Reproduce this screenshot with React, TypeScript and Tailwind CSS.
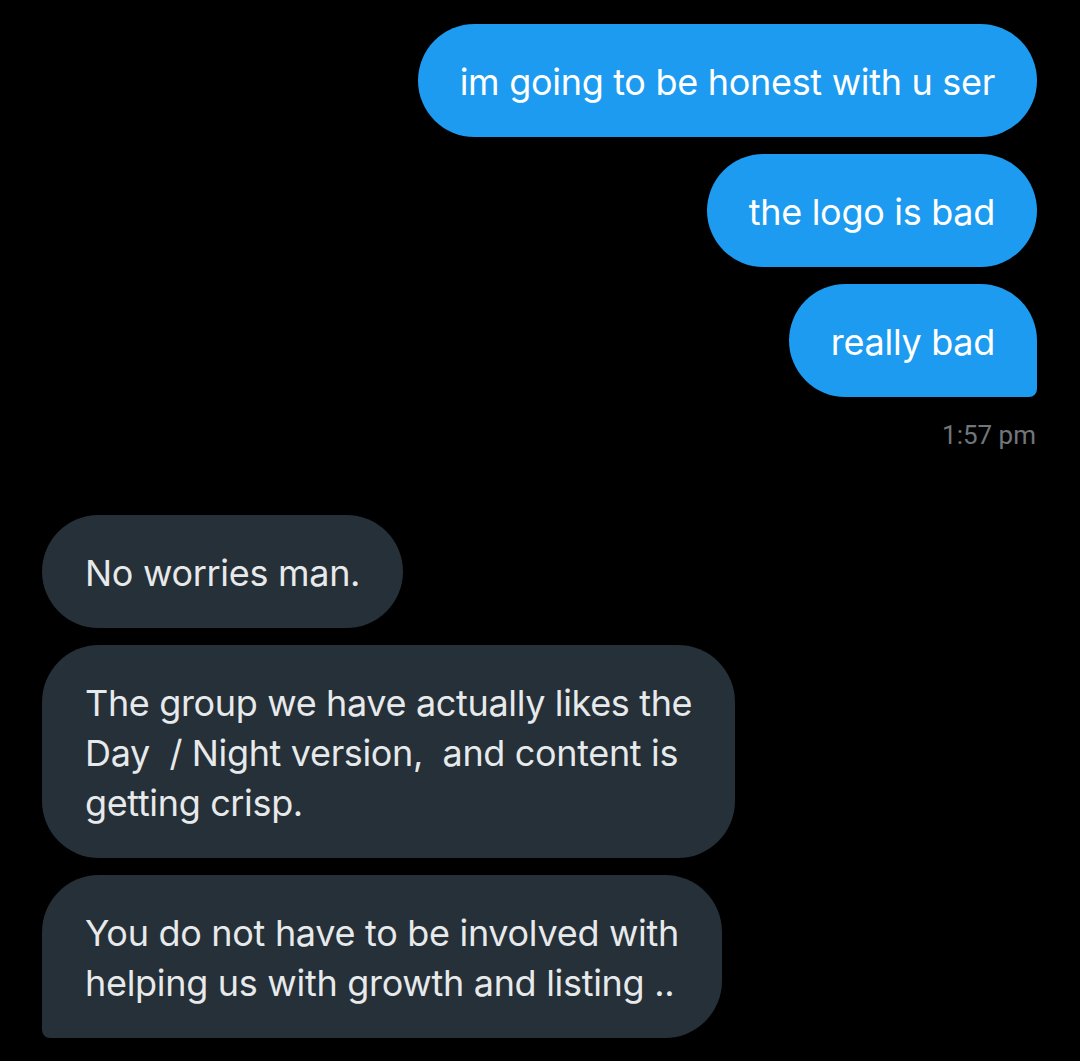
import React from "react";

const font = { fontFamily: "Inter, 'Noto Sans', sans-serif" };

export default function App() {
  return (
    <div className="w-[1080px] h-[1061px] bg-black overflow-hidden" style={font}>
      <div className="flex flex-col items-end pr-[43px] pt-[24px] gap-[17px]">
        <div className="bg-[#1d9bf0] text-white text-[36px] leading-[50px] tracking-[-0.3px] whitespace-nowrap px-[42px] pt-[33px] pb-[30px] rounded-[57px]">
          im going to be honest with u ser
        </div>
        <div className="bg-[#1d9bf0] text-white text-[36px] leading-[50px] tracking-[-0.3px] whitespace-nowrap px-[42px] pt-[33px] pb-[30px] rounded-[57px]">
          the logo is bad
        </div>
        <div className="bg-[#1d9bf0] text-white text-[36px] leading-[50px] tracking-[-0.3px] whitespace-nowrap px-[42px] pt-[33px] pb-[30px] rounded-[57px] rounded-br-[8px]">
          really bad
        </div>
      </div>
      <div className="flex justify-end pr-[44px] pt-[22px]">
        <span className="text-[#71767b] text-[26px] leading-[32px]" style={{ fontFamily: "Roboto, sans-serif" }}>
          1:57 pm
        </span>
      </div>
      <div className="flex flex-col items-start pl-[42px] pt-[64px] gap-[17px]">
        <div className="bg-[#253038] text-[#e7e9ea] text-[36px] leading-[50px] tracking-[-0.3px] whitespace-nowrap px-[43px] pt-[33px] pb-[30px] rounded-[57px]">
          No worries man.
        </div>
        <div className="bg-[#253038] text-[#e7e9ea] text-[36px] leading-[50px] tracking-[-0.35px] whitespace-nowrap px-[43px] pt-[33px] pb-[30px] rounded-[57px]">
          The group we have actually likes the
          <br />
          Day&nbsp; / Night version,&nbsp; and content is
          <br />
          getting crisp.
        </div>
        <div className="bg-[#253038] text-[#e7e9ea] text-[36px] leading-[50px] tracking-[-0.3px] whitespace-nowrap px-[43px] pt-[33px] pb-[30px] rounded-[57px] rounded-bl-[8px]">
          You do not have to be involved with
          <br />
          helping us with growth and listing ..
        </div>
      </div>
    </div>
  );
}
